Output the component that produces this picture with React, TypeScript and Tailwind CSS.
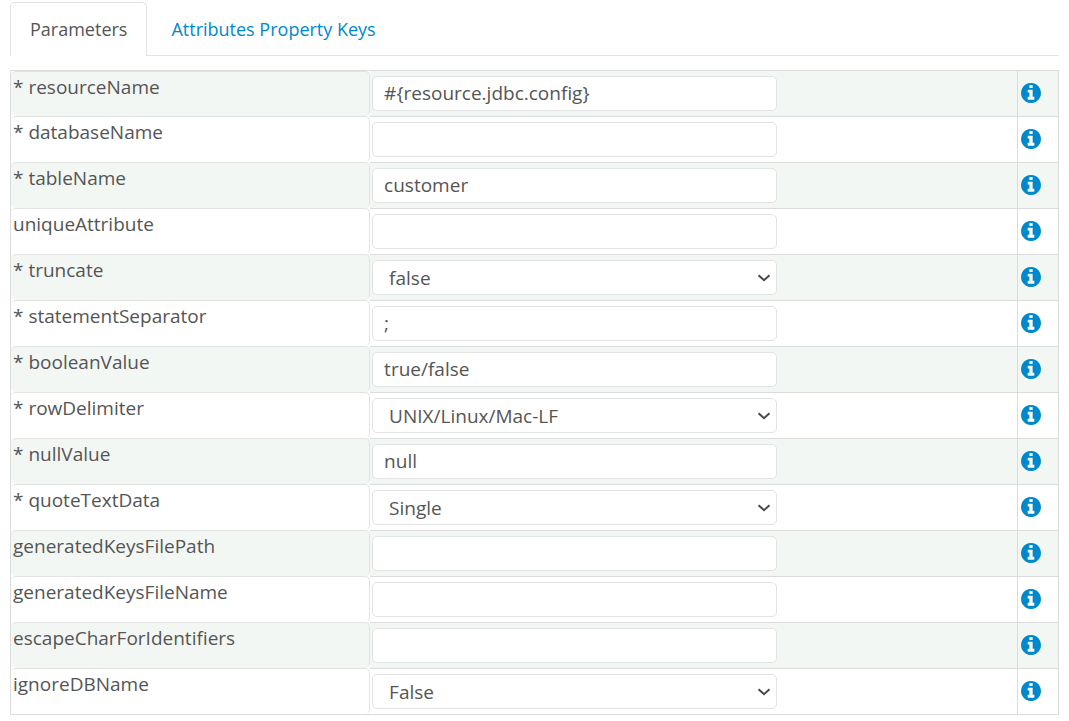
interface Parameter {
  name: string;
  required?: boolean;
  value?: string;
  options?: string[];
}

const parameters: Parameter[] = [
  { name: "resourceName", required: true, value: "#{resource.jdbc.config}" },
  { name: "databaseName", required: true },
  { name: "tableName", required: true, value: "customer" },
  { name: "uniqueAttribute" },
  { name: "truncate", required: true, value: "false", options: ["false", "true"] },
  { name: "statementSeparator", required: true, value: ";" },
  { name: "booleanValue", required: true, value: "true/false" },
  {
    name: "rowDelimiter",
    required: true,
    value: "UNIX/Linux/Mac-LF",
    options: ["UNIX/Linux/Mac-LF", "Windows-CRLF"],
  },
  { name: "nullValue", required: true, value: "null" },
  { name: "quoteTextData", required: true, value: "Single", options: ["Single", "Double", "None"] },
  { name: "generatedKeysFilePath" },
  { name: "generatedKeysFileName" },
  { name: "escapeCharForIdentifiers" },
  { name: "ignoreDBName", value: "False", options: ["False", "True"] },
];

const fieldClass =
  "block h-[35px] w-full rounded-[5px] border border-[#e2e4e4] bg-white text-[19px] text-[#555] outline-none focus:border-[#0088cc]";

function InfoIcon() {
  return (
    <svg viewBox="0 128 1536 1536" className="size-5" fill="currentColor" aria-hidden>
      <path d="M1024 1376v-160q0-14-9-23t-23-9h-96v-512q0-14-9-23t-23-9h-320q-14 0-23 9t-9 23v160q0 14 9 23t23 9h96v320h-96q-14 0-23 9t-9 23v160q0 14 9 23t23 9h448q14 0 23-9t9-23zm-128-896v-160q0-14-9-23t-23-9h-192q-14 0-23 9t-9 23v160q0 14 9 23t23 9h192q14 0 23-9t9-23zm640 416q0 209-103 385.500t-279.500 279.500-385.500 103-385.500-103-279.500-279.500-103-385.500 103-385.500 279.500-279.500 385.500-103 385.500 103 279.500 279.500 103 385.500z" />
    </svg>
  );
}

function Field({ param }: { param: Parameter }) {
  if (!param.options) {
    return (
      <input
        id={param.name}
        type="text"
        defaultValue={param.value}
        className={`${fieldClass} px-[11px] pb-0.5`}
      />
    );
  }
  return (
    <div className="relative">
      <select
        id={param.name}
        defaultValue={param.value}
        className={`${fieldClass} appearance-none px-4 pt-0.5`}
      >
        {param.options.map((option) => (
          <option key={option}>{option}</option>
        ))}
      </select>
      <svg
        viewBox="0 0 14 8"
        className="pointer-events-none absolute top-[14px] right-[6px] h-2 w-[14px]"
        fill="none"
        stroke="#4a4a4a"
        strokeWidth="2"
        aria-hidden
      >
        <path d="M1.500 1.200 7 6.200l5.500-5" />
      </svg>
    </div>
  );
}

export default function App() {
  return (
    <main className="bg-white px-[10px] pt-0.5 pb-2 font-['Open_Sans','Noto_Sans',sans-serif] text-[18px] leading-[27px] text-[#555]">
      {/* Tabs */}
      <nav className="flex border-b border-[#e2e4e4]">
        <button
          type="button"
          className="-mb-px h-[54px] rounded-t-[5px] border border-b-0 border-[#e2e4e4] bg-white px-[19px]"
        >
          Parameters
        </button>
        <button type="button" className="px-6 pt-0.5 text-[#0088cc]">
          Attributes Property Keys
        </button>
      </nav>

      {/* Parameter grid */}
      <table className="mt-[14px] w-full table-fixed border-separate border-spacing-0 border border-t-0 border-[#dcdcdc]">
        <colgroup>
          <col className="w-[34.3%]" />
          <col />
          <col className="w-[41px]" />
        </colgroup>
        <tbody>
          {parameters.map((param) => (
            <tr key={param.name} className="group">
              <td className="p-0 align-top group-first:border-t group-first:border-[#dcdcdc]">
                <label
                  htmlFor={param.name}
                  className="block h-[46px] rounded-[5px] border-t border-r border-[#e2e4e4] pl-0.5 pt-0.5 text-[19px] group-first:h-[45px] group-odd:bg-[#f3f7f4]"
                >
                  {param.required && "* "}
                  {param.name}
                </label>
              </td>
              <td className="border-t border-[#dcdcdc] px-[2px] py-0 group-odd:bg-[#f3f7f4]">
                <div className="w-[405px] max-w-full">
                  <Field param={param} />
                </div>
              </td>
              <td className="border-t border-l border-[#dcdcdc] pt-0 pb-0.5 pl-[3px] group-odd:bg-[#f3f7f4]">
                <button
                  type="button"
                  aria-label={`About ${param.name}`}
                  className="block text-[#0088cc]"
                >
                  <InfoIcon />
                </button>
              </td>
            </tr>
          ))}
        </tbody>
      </table>
    </main>
  );
}
